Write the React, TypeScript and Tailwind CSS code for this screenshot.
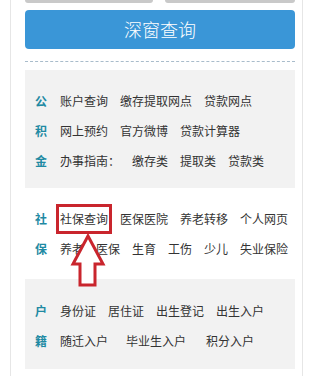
import React from "react"

type Row = { label: string; items: string[]; gaps?: number[] }

const fund: Row[] = [
  { label: "公", items: ["账户查询", "缴存提取网点", "贷款网点"] },
  { label: "积", items: ["网上预约", "官方微博", "贷款计算器"] },
  { label: "金", items: ["办事指南：", "缴存类", "提取类", "贷款类"] },
]

const social: Row[] = [
  { label: "社", items: ["社保查询", "医保医院", "养老转移", "个人网页"] },
  { label: "保", items: ["养老", "医保", "生育", "工伤", "少儿", "失业保险"] },
]

const household: Row[] = [
  { label: "户", items: ["身份证", "居住证", "出生登记", "出生入户"] },
  { label: "籍", items: ["随迁入户", "毕业生入户", "积分入户"], gaps: [0, 18, 20] },
]

function LinkRow({ row }: { row: Row }) {
  return (
    <div className="flex h-[30px] items-center">
      <span className="w-[12px] text-[12px] font-bold text-[#1f8aa3]">{row.label}</span>
      <div className="ml-[13px] flex gap-3">
        {row.items.map((item, i) => (
          <span
            key={item}
            className="relative whitespace-nowrap text-[12px] text-[#333]"
            style={row.gaps && i > 0 ? { marginLeft: row.gaps[i] - 12 } : undefined}
          >
            {item}
            {item === "社保查询" && (
              <span className="absolute -left-[4px] -right-[4px] -top-[6px] -bottom-[6px] border-[3px] border-[#c9252d]" />
            )}
          </span>
        ))}
      </div>
    </div>
  )
}

export default function App() {
  return (
    <div
      className="relative h-[376px] w-[311px] overflow-hidden bg-white"
      style={{ fontFamily: '"Noto Sans CJK SC", "Noto Sans", sans-serif' }}
    >
      <div className="ml-[10px] h-full w-[293px] border-x border-[#e6e6e6] pl-[14px] pr-[7px]">
        {/* top inputs peeking in */}
        <div className="flex h-[3px] gap-[12px]">
          <div className="w-[128px] rounded-b-[3px] bg-[#c9c9c9]" />
          <div className="flex-1 rounded-b-[3px] bg-[#c9c9c9]" />
        </div>

        <button className="mt-[7px] flex h-[39px] w-full items-center justify-center rounded-[4px] bg-[#3a96d7] text-[18px] font-light text-white">
          深窗查询
        </button>

        <div className="mt-[12px] border-t border-dashed border-[#a9bccb]" />

        {/* 公积金 */}
        <div className="mt-[8px] bg-[#f2f2f2] pb-[12px] pl-[10px] pt-[16px]">
          {fund.map((r) => (
            <LinkRow key={r.label} row={r} />
          ))}
        </div>

        {/* 社保 */}
        <div className="pb-[15px] pl-[10px] pt-[16px]">
          {social.map((r) => (
            <LinkRow key={r.label} row={r} />
          ))}
        </div>

        {/* 户籍 */}
        <div className="bg-[#f2f2f2] pb-[13px] pl-[10px] pt-[17px]">
          {household.map((r) => (
            <LinkRow key={r.label} row={r} />
          ))}
        </div>
      </div>

      {/* red arrow */}
      <svg className="pointer-events-none absolute left-0 top-0" width="311" height="376">
        <polygon
          points="88,236 103,264 95,264 95,285 80,285 80,264 73,264"
          fill="white"
          stroke="#c9252d"
          strokeWidth="3"
          strokeLinejoin="miter"
        />
      </svg>
    </div>
  )
}
